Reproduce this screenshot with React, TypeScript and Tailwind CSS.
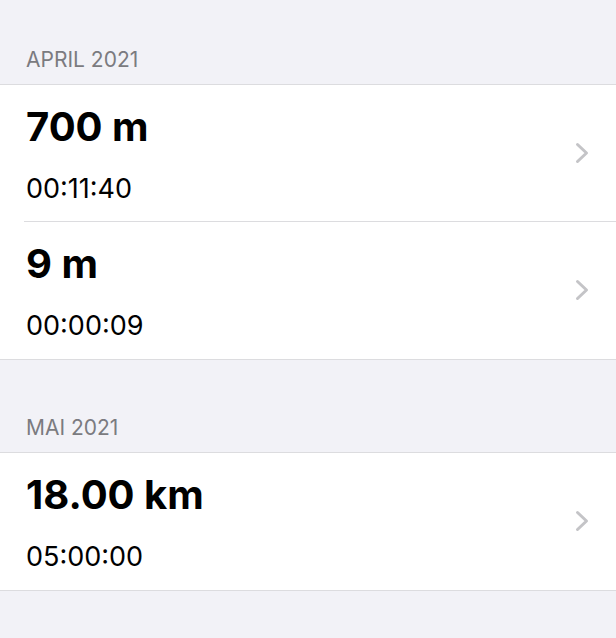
import React from "react";

type Activity = { distance: string; duration: string };
type Month = { title: string; activities: Activity[] };

const months: Month[] = [
  {
    title: "April 2021",
    activities: [
      { distance: "700 m", duration: "00:11:40" },
      { distance: "9 m", duration: "00:00:09" },
    ],
  },
  {
    title: "Mai 2021",
    activities: [{ distance: "18.00 km", duration: "05:00:00" }],
  },
];

function Chevron() {
  return (
    <svg className="h-6 w-4 shrink-0" viewBox="0 0 16 24" fill="none" aria-hidden="true">
      <path d="M3.5 3.5 L12.5 12 L3.5 20.5" stroke="#c4c4c7" strokeWidth="3" strokeLinecap="round" strokeLinejoin="round" />
    </svg>
  );
}

function ActivityRow({ activity }: { activity: Activity }) {
  return (
    <li className="group pl-6">
      <a
        href="#"
        className="flex items-center justify-between border-b border-[#dcdcdf] py-4 pr-[26px] pl-0.5 text-black group-last:border-transparent"
      >
        <div>
          <div className="text-[40px] leading-[52px] font-bold">{activity.distance}</div>
          <div className="mt-5 text-[27px] leading-8">{activity.duration}</div>
        </div>
        <Chevron />
      </a>
    </li>
  );
}

export default function App() {
  return (
    <main className="min-h-screen bg-[#f2f2f7] font-[Inter,sans-serif]">
      {months.map((month) => (
        <section key={month.title} className="pb-2">
          <h2 className="px-[26px] pt-12 pb-3 text-[21px] leading-6 font-normal text-[#7b7b80] uppercase">
            {month.title}
          </h2>
          <ul className="border-y border-[#dcdcdf] bg-white">
            {month.activities.map((activity) => (
              <ActivityRow key={activity.distance} activity={activity} />
            ))}
          </ul>
        </section>
      ))}
    </main>
  );
}
